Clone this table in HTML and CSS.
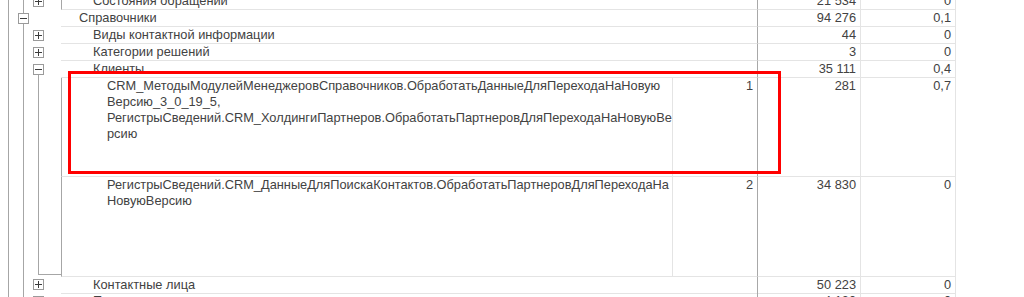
FILE: index.html
```html
<!DOCTYPE html>
<html lang="ru">
<head>
<meta charset="utf-8">
<title>Отчет</title>
<link rel="stylesheet" href="styles.css">
</head>
<body>
<div class="sheet">
  <div class="row grp">
    <div class="tree">
      <span class="g"><i class="seg"></i></span>
      <span class="g"><i class="seg"></i></span>
      <span class="g"><i class="seg top"></i><b class="box plus"></b><i class="seg blank"></i></span>
    </div>
    <div class="name l2 edge">Состояния обращений</div>
    <div class="val">21 534</div>
    <div class="pct">0</div>
  </div>
  <div class="row grp">
    <div class="tree">
      <span class="g"><i class="seg"></i></span>
      <span class="g"><i class="seg top"></i><b class="box"></b><i class="seg"></i></span>
    </div>
    <div class="name l1">Справочники</div>
    <div class="val">94 276</div>
    <div class="pct">0,1</div>
  </div>
  <div class="row grp">
    <div class="tree">
      <span class="g"><i class="seg"></i></span>
      <span class="g"><i class="seg"></i></span>
      <span class="g"><i class="seg top blank"></i><b class="box plus"></b><i class="seg blank"></i></span>
    </div>
    <div class="name l2">Виды контактной информации</div>
    <div class="val">44</div>
    <div class="pct">0</div>
  </div>
  <div class="row grp">
    <div class="tree">
      <span class="g"><i class="seg"></i></span>
      <span class="g"><i class="seg"></i></span>
      <span class="g"><i class="seg top blank"></i><b class="box plus"></b><i class="seg blank"></i></span>
    </div>
    <div class="name l2">Категории решений</div>
    <div class="val">3</div>
    <div class="pct">0</div>
  </div>
  <div class="row grp">
    <div class="tree">
      <span class="g"><i class="seg"></i></span>
      <span class="g"><i class="seg"></i></span>
      <span class="g"><i class="seg top blank"></i><b class="box"></b><i class="seg"></i></span>
    </div>
    <div class="name l2">Клиенты</div>
    <div class="val">35 111</div>
    <div class="pct">0,4</div>
  </div>
  <div class="row dtl tall1">
    <div class="tree">
      <span class="g"><i class="seg"></i></span>
      <span class="g"><i class="seg"></i></span>
      <span class="g"><i class="seg"></i></span>
    </div>
    <div class="name">
      <span class="ln">CRM_МетодыМодулейМенеджеровСправочников.ОбработатьДанныеДляПереходаНаНовую</span>
      <span class="ln">Версию_3_0_19_5,</span>
      <span class="ln">РегистрыСведений.CRM_ХолдингиПартнеров.ОбработатьПартнеровДляПереходаНаНовуюВе</span>
      <span class="ln">рсию</span>
    </div>
    <div class="cnt">1</div>
    <div class="val">281</div>
    <div class="pct">0,7</div>
  </div>
  <div class="row dtl tall2">
    <div class="tree">
      <span class="g"><i class="seg"></i></span>
      <span class="g"><i class="seg"></i></span>
      <span class="g wide"><i class="seg end"></i></span>
    </div>
    <div class="name">
      <span class="ln">РегистрыСведений.CRM_ДанныеДляПоискаКонтактов.ОбработатьПартнеровДляПереходаНа</span>
      <span class="ln">НовуюВерсию</span>
    </div>
    <div class="cnt">2</div>
    <div class="val">34 830</div>
    <div class="pct">0</div>
  </div>
  <div class="row grp short">
    <div class="tree">
      <span class="g"><i class="seg"></i></span>
      <span class="g"><i class="seg"></i></span>
      <span class="g"><i class="seg top blank"></i><b class="box plus"></b><i class="seg blank"></i></span>
    </div>
    <div class="name l2">Контактные лица</div>
    <div class="val">50 223</div>
    <div class="pct">0</div>
  </div>
  <div class="row grp">
    <div class="tree">
      <span class="g"><i class="seg"></i></span>
      <span class="g"><i class="seg"></i></span>
      <span class="g"><i class="seg top blank"></i><b class="box plus"></b><i class="seg blank"></i></span>
    </div>
    <div class="name l2">Партнеры</div>
    <div class="val">4 130</div>
    <div class="pct">0</div>
  </div>
  <div class="mark"></div>
</div>
</body>
</html>
```
FILE: styles.css
```css
* { box-sizing: border-box; }
html, body { margin: 0; background: #fff; }
body {
  height: 297px;
  overflow: hidden;
  font-family: "Liberation Sans", Arial, sans-serif;
  font-size: 12.8px;
  color: #424242;
}
.sheet { position: relative; margin-top: -7px; width: 1024px; }
.row {
  display: grid;
  grid-template-columns: 61px 611px 85px 103px 96px;
  height: 17px;
  line-height: 16px;
}
.row.tall1 { height: 99px; }
.row.tall2 { height: 100px; }
.row.short { height: 16px; }

.tree { display: flex; padding-left: 8px; }
.g { width: 15px; display: flex; flex-direction: column; }
.g.wide { flex: 1; width: auto; }
.seg { display: block; flex: 1; border-left: 1px solid #a6a6a6; }
.seg.top { flex: none; height: 3px; }
.short .seg.top { height: 2px; }
.seg.blank { border-left-color: transparent; }
.seg.end { border-bottom: 1px solid #a6a6a6; margin-bottom: 2px; }

.box {
  display: grid;
  place-items: center;
  width: 11px;
  height: 11px;
  margin-left: -5px;
  border: 1px solid #9a9a9a;
  background: #fff;
}
.box::before, .box::after {
  content: "";
  grid-area: 1 / 1;
  background: #3c3c3c;
}
.box::before { width: 7px; height: 1px; }
.box.plus::after { width: 1px; height: 7px; }

.name {
  grid-column: span 2;
  border-bottom: 1px solid #e4e4e4;
  white-space: nowrap;
  overflow: hidden;
}
.name.edge { border-left: 1px solid #a6a6a6; }
.l1 { padding-left: 18px; }
.l2 { padding-left: 32px; }
.l2.edge { padding-left: 31px; }
.dtl .name {
  grid-column: auto;
  border-left: 1px solid #a6a6a6;
  padding-left: 45px;
}
.ln { display: block; }

.cnt, .val, .pct {
  border-bottom: 1px solid #e4e4e4;
  text-align: right;
  padding-right: 4px;
  white-space: nowrap;
}
.cnt { border-left: 1px solid #e4e4e4; }
.val { border-left: 1px solid #a8a8a8; }
.pct { border-left: 1px solid #e4e4e4; border-right: 1px solid #e4e4e4; }

.mark {
  position: absolute;
  left: 68px;
  top: 78px;
  width: 713px;
  height: 103px;
  border: 3px solid #ff0000;
}
```
